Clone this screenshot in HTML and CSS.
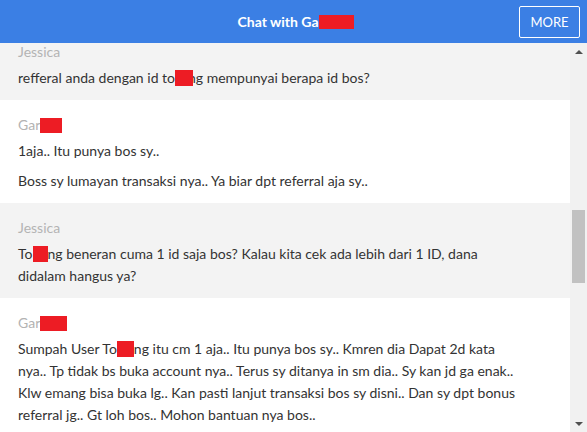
FILE: index.html
```html
<!DOCTYPE html>
<html lang="en">
<head>
  <meta charset="UTF-8" />
  <title>Chat</title>
  <link rel="stylesheet" href="styles.css">
</head>
<body>

<div class="header">
  <div class="title">Chat with Ga<span class="redact title-redact"></span></div>
  <button class="more">MORE</button>
</div>

<div class="chat">
  <div class="messages">
    <div class="list">
      <div class="msg grey">
        <div class="name">Jessica</div>
        <p>refferal anda dengan id to<span class="redact w18 tight"></span>ng mempunyai berapa id bos?</p>
      </div>

      <div class="msg">
        <div class="name">Gar<span class="redact w22"></span></div>
        <p>1aja.. Itu punya bos sy..</p>
        <p>Boss sy lumayan transaksi nya.. Ya biar dpt referral aja sy..</p>
      </div>

      <div class="msg grey">
        <div class="name">Jessica</div>
        <p>To<span class="redact w15"></span>ng beneran cuma 1 id saja bos? Kalau kita cek ada lebih dari 1 ID, dana didalam hangus ya?</p>
      </div>

      <div class="msg">
        <div class="name">Gar<span class="redact w27"></span></div>
        <p>Sumpah User To<span class="redact w17"></span>ng itu cm 1 aja.. Itu punya bos sy.. Kmren dia Dapat 2d kata nya.. Tp tidak bs buka account nya.. Terus sy ditanya in sm dia.. Sy kan jd ga enak.. Klw emang bisa buka lg.. Kan pasti lanjut transaksi bos sy disni.. Dan sy dpt bonus referral jg.. Gt loh bos.. Mohon bantuan nya bos..</p>
      </div>
    </div>
  </div>

  <!-- fake classic scrollbar -->
  <div class="scrollbar">
    <div class="arrow up"></div>
    <div class="track">
      <div class="thumb"></div>
    </div>
    <div class="arrow down"></div>
  </div>
</div>

</body>
</html>
```

FILE: styles.css
```css
body {
  margin: 0;
  font-family: Lato, "Open Sans", sans-serif;
  background: #fff;
  width: 587px;
  height: 432px;
  overflow: hidden;
}

.header {
  height: 43px;
  background: #3b7fe4;
  display: flex;
  align-items: center;
  justify-content: center;
  position: relative;
}

.title {
  color: #fff;
  font-size: 14px;
  font-weight: bold;
  display: flex;
  align-items: center;
  margin-left: 4px;
}

.more {
  position: absolute;
  right: 7px;
  top: 6px;
  width: 61px;
  height: 32px;
  background: transparent;
  border: 1px solid #fff;
  border-radius: 2px;
  color: #fff;
  font-family: Lato, sans-serif;
  font-size: 13px;
  padding: 0;
}

.chat {
  display: flex;
  height: 389px;
}

.messages {
  flex: 1;
  overflow: hidden;
}

.list {
  margin-top: -16px;
}

.msg {
  padding: 16px 18px 11px;
  background: #fff;
}

.msg.grey {
  background: #f3f3f3;
}

.name {
  color: #b3b3b3;
  font-size: 14px;
  line-height: 18px;
  height: 18px;
  margin-bottom: 6px;
  display: flex;
  align-items: center;
}

.msg p {
  margin: 0 0 8px;
  font-size: 14px;
  line-height: 22px;
  color: #333;
  max-width: 500px;
}

.msg p:last-child {
  margin-bottom: 0;
}

.redact {
  display: inline-block;
  background: #ed1c24;
  height: 16px;
  vertical-align: -3px;
}

.redact.tight { margin-right: -5px; position: relative; }

.title-redact { width: 35px; height: 14px; }
.name .redact { height: 15px; }
.w15 { width: 15px; }
.w17 { width: 17px; }
.w18 { width: 18px; }
.w22 { width: 22px; }
.w27 { width: 27px; }

.scrollbar {
  width: 17px;
  background: #f1f1f1;
  display: flex;
  flex-direction: column;
}

.arrow {
  height: 17px;
  display: flex;
  align-items: center;
  justify-content: center;
}

.arrow::after {
  content: "";
  border-left: 4px solid transparent;
  border-right: 4px solid transparent;
}

.arrow.up::after { border-bottom: 4px solid #505050; }
.arrow.down::after { border-top: 4px solid #505050; }

.track {
  flex: 1;
}

.thumb {
  margin: 150px 2px 0;
  height: 73px;
  background: #c1c1c1;
}
```
